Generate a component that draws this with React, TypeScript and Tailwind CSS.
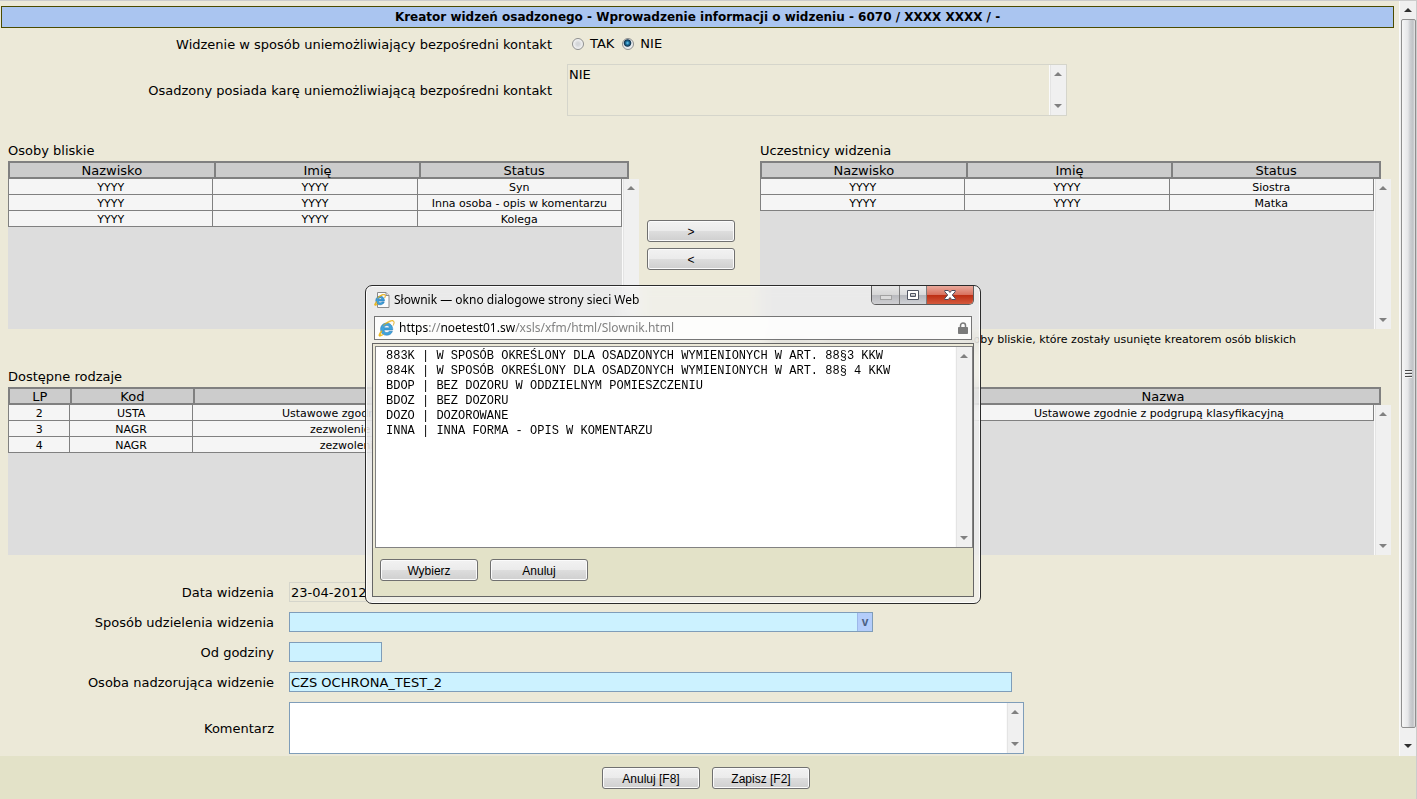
import React, { useId } from "react";

type Column = { title: string };

type GridTableProps = {
  label: string;
  columns: Column[];
  rows: string[][];
  tracks: string;
};

const verdana = "font-['DejaVu_Sans',sans-serif]";
const segoe = "font-['Noto_Sans',sans-serif]";

function ArrowUp({ dark = false }: { dark?: boolean }) {
  return (
    <svg width="8" height="4" viewBox="0 0 8 4" aria-hidden="true">
      <path d="M0 4 L4 0 L8 4 Z" fill={dark ? "#2e2e2e" : "#808080"} />
    </svg>
  );
}

function ArrowDown({ dark = false }: { dark?: boolean }) {
  return (
    <svg width="8" height="4" viewBox="0 0 8 4" aria-hidden="true">
      <path d="M0 0 L4 4 L8 0 Z" fill={dark ? "#2e2e2e" : "#808080"} />
    </svg>
  );
}

function IdleScrollbar() {
  return (
    <div className="flex w-[17px] shrink-0 flex-col items-center justify-between border-l border-[#fafafa] bg-[#f0f0f0] py-[7px] shadow-[inset_1px_0_0_#e4e4e4]">
      <ArrowUp />
      <ArrowDown />
    </div>
  );
}

function GridTable({ label, columns, rows, tracks }: GridTableProps) {
  const id = useId();
  return (
    <div className="min-w-0">
      <h2 id={id} className="h-[19px] text-[13px] leading-[17px]">
        {label}
      </h2>
      <div className="grid grid-cols-[1fr_17px] grid-rows-[18px_150px]">
        <table aria-labelledby={id} className="col-span-2 col-start-1 row-span-2 row-start-1 block">
          <thead className="mr-[10px] block border-2 border-[#808080] bg-[#ccc]">
            <tr className={`grid ${tracks}`}>
              {columns.map((c, i) => (
                <th
                  key={c.title}
                  className={`h-[14px] text-[13px] leading-4 font-normal ${i < columns.length - 1 ? "border-r-2 border-[#808080]" : ""}`}
                >
                  {c.title}
                </th>
              ))}
            </tr>
          </thead>
          <tbody className="mr-[17px] block h-[150px] bg-[#ddd]">
            {rows.map((r, i) => (
              <tr key={i} className={`grid border-l border-[#808080] bg-[#f5f5f5] ${tracks}`}>
                {r.map((cell, j) => (
                  <td
                    key={j}
                    className="h-4 overflow-hidden border-r border-b border-[#808080] text-center text-[11px] leading-[17px] whitespace-nowrap"
                  >
                    {cell}
                  </td>
                ))}
              </tr>
            ))}
          </tbody>
        </table>
        <div className="col-start-2 row-start-2 flex">
          <IdleScrollbar />
        </div>
      </div>
    </div>
  );
}

function PushButton({ children, className = "" }: { children: React.ReactNode; className?: string }) {
  return (
    <button
      type="button"
      className={`h-[22px] rounded-[3px] border border-[#707070] bg-[linear-gradient(#f2f2f2_0%,#ebebeb_48%,#dddddd_52%,#cfcfcf_100%)] pt-0.5 font-['Liberation_Sans',sans-serif] text-[12px] leading-[18px] shadow-[inset_0_0_0_1px_#fbfbfb] ${className}`}
    >
      {children}
    </button>
  );
}

function Radio({ label, checked }: { label: string; checked?: boolean }) {
  return (
    <label className="flex items-center gap-1.5">
      <input
        type="radio"
        name="kontakt"
        defaultChecked={checked}
        className="size-3 appearance-none rounded-full border border-[#8e8f8f] bg-[radial-gradient(circle,#d4d6d8_20%,#f4f4f4_70%)] checked:bg-[radial-gradient(circle_at_45%_40%,#6fd0f5_0%,#1b6d9c_22%,#12354f_40%,#e4e8ec_52%,#f6f6f6_100%)]"
      />
      <span className="leading-5">{label}</span>
    </label>
  );
}

function BrowserMark({ size, outline = 0.5 }: { size: number; outline?: number }) {
  return (
    <svg width={size} height={size} viewBox="0 0 18 18" aria-hidden="true">
      <path
        d="M15.6 10.6H6.4c.2 1.7 1.3 2.7 2.9 2.7 1.2 0 2-.5 2.5-1.3h3.500c-.9 2.600-3.100 4.200-6.100 4.200-3.900 0-6.500-2.600-6.500-6.300 0-3.900 2.700-6.600 6.500-6.600 4 0 6.600 2.900 6.400 7.300zM6.500 8.300h5.600c-.2-1.500-1.200-2.400-2.700-2.400-1.600 0-2.600.9-2.900 2.400z"
        fill="#3fa3dc"
        stroke="#1f6fae"
        strokeWidth={outline}
      />
      <path
        d="M3.800 11.200C.6 14.700.2 17.200 1.700 17.200c1 0 2.600-.8 4.300-2.200-3.200 1.800-4 .5-1.800-3zM10.200 3.200c3.500-2.300 6-2.500 6.600-1.300.4.900 0 2.300-.8 4 2.300-4.200.6-5.800-1.800-5.500-2.400.2-6 2.300-9 5.600 1.600-1.300 3.300-2.100 5-2.800z"
        fill="#f5c21b"
        stroke="#e0a713"
        strokeWidth={outline}
      />
    </svg>
  );
}

function PageIcon() {
  return (
    <svg width="16" height="16" viewBox="0 0 16 16" aria-hidden="true">
      <path d="M3.500.5h8.500l3 3v12h-11.500z" fill="#fcfcfc" stroke="#8a8a8a" />
      <path d="M12 .5v3h3" fill="#e2e2e2" stroke="#8a8a8a" />
      <svg x="0" y="2" width="12" height="12">
        <BrowserMark size={12} outline={0.9} />
      </svg>
    </svg>
  );
}

const entries = [
  "883K | W SPOSÓB OKREŚLONY DLA OSADZONYCH WYMIENIONYCH W ART. 88§3 KKW",
  "884K | W SPOSÓB OKREŚLONY DLA OSADZONYCH WYMIENIONYCH W ART. 88§ 4 KKW",
  "BDOP | BEZ DOZORU W ODDZIELNYM POMIESZCZENIU",
  "BDOZ | BEZ DOZORU",
  "DOZO | DOZOROWANE",
  "INNA | INNA FORMA - OPIS W KOMENTARZU",
];

function DictionaryDialog() {
  return (
    <div
      role="dialog"
      aria-labelledby="slownik-title"
      className="absolute top-[284px] left-[365px] flex h-[319px] w-[616px] flex-col rounded-[7px] border border-[#2b2b2b] bg-[#f4f4f4]/60 px-1.5 pb-1.5 shadow-[inset_0_0_0_1px_rgba(255,255,255,0.85)] backdrop-blur-[7px]"
    >
      <div className="flex h-[30px] justify-between">
        <div className="flex h-7 items-center gap-1 pl-0.5">
          <PageIcon />
          <h2 id="slownik-title" className={`${segoe} text-[12px] leading-4`}>
            Słownik — okno dialogowe strony sieci Web
          </h2>
        </div>
        <div className="flex h-[19px] overflow-hidden rounded-b-[5px] border border-t-0 border-[#5c5c5c]">
          <button
            type="button"
            disabled
            aria-label="Minimalizuj"
            className="flex w-7 justify-center border-r border-[#7c7c7c] bg-[linear-gradient(#e6e6e6_0%,#d6d6d6_48%,#b9babe_52%,#cfcfd2_100%)]"
          >
            <svg width="12" height="18" viewBox="0 0 12 18" aria-hidden="true">
              <rect x="0.500" y="9.500" width="11" height="4" fill="#dcdcdc" stroke="#a2a2a2" />
            </svg>
          </button>
          <button
            type="button"
            aria-label="Maksymalizuj"
            className="flex w-[27px] justify-center border-r border-[#7c7c7c] bg-[linear-gradient(#ececec_0%,#d9dadc_48%,#b4b6bc_52%,#d0d2d6_100%)]"
          >
            <svg width="12" height="18" viewBox="0 0 12 18" aria-hidden="true">
              <path d="M.5 4.500h11v9H.5z M3.500 7.500v3h5v-3z" fill="#fff" stroke="#4f5462" fillRule="evenodd" />
            </svg>
          </button>
          <button
            type="button"
            aria-label="Zamknij"
            className="flex w-[46px] justify-center bg-[linear-gradient(#e9a99c_0%,#d9725f_48%,#bd2f14_52%,#d4593c_100%)]"
          >
            <svg width="12" height="18" viewBox="0 0 12 18" aria-hidden="true">
              <path
                d="M.8 4.500h3.500l1.700 2 1.700-2h3.500v1.200L8.300 9l2.900 3.300v1.200H7.700l-1.700-2-1.700 2H.8v-1.200L3.700 9 .8 5.700z"
                fill="#fff"
                stroke="#4a4a5c"
              />
            </svg>
          </button>
        </div>
      </div>
      <div className="mx-0.5 flex h-6 shrink-0 items-center gap-1 border border-[#767676] bg-white/85 px-[3px]">
        <BrowserMark size={17} />
        <p className={`${segoe} flex-1 text-[12px] leading-4 text-[#828282]`}>
          <span className="text-black">https</span>://<span className="text-black">noetest01.sw</span>
          /xsls/xfm/html/Slownik.html
        </p>
        <svg width="10" height="12" viewBox="0 0 10 12" aria-hidden="true">
          <path d="M2.500 6V3.500a2.500 2.500 0 0 1 5 0V6" fill="none" stroke="#7b7b7b" strokeWidth="1.500" />
          <rect y="5" width="10" height="7" rx="0.800" fill="#7b7b7b" />
        </svg>
      </div>
      <div className="mt-[3px] flex min-h-0 flex-1 flex-col border border-[#666] bg-[#ece9d8] pt-0.5 pl-0.5">
        <div className="flex h-[202px] border border-[#828282] bg-white">
          <select
            size={13}
            aria-label="Słownik"
            className="min-w-0 flex-1 appearance-none overflow-hidden bg-white pt-0.5 font-['Liberation_Mono',monospace] text-[12px] outline-none"
          >
            {entries.map((e) => (
              <option key={e} className="h-[15px] min-h-[15px] px-[10px] py-0 leading-[15px]">
                {e}
              </option>
            ))}
          </select>
          <IdleScrollbar />
        </div>
        <div className="-ml-0.5 flex flex-1 items-start gap-3 bg-[#e3e2c8] pt-[11px] pl-[7px]">
          <PushButton className="w-[98px]">Wybierz</PushButton>
          <PushButton className="w-[98px]">Anuluj</PushButton>
        </div>
      </div>
    </div>
  );
}

const people: Column[] = [{ title: "Nazwisko" }, { title: "Imię" }, { title: "Status" }];
const kinds: Column[] = [{ title: "LP" }, { title: "Kod" }, { title: "Nazwa" }];

const field = "h-5 border border-[#7f9db9] bg-[#ccf2ff] px-px leading-[18px] outline-none";
const caption = "pt-0.5 text-right leading-[18px]";

export default function App() {
  return (
    <div className={`relative flex min-h-screen flex-col border-t border-r border-[#ccc] bg-[#ece9d8] text-[13px] text-black ${verdana}`}>
      <div className="flex flex-1">
        <main className="min-w-0 flex-1 pt-[5px] pb-0.5">
          <h1 className="mr-[5px] ml-px h-[22px] border border-[#4b4b00] bg-[#aac5f0] text-center text-[12px] leading-[21px] font-bold">
            Kreator widzeń osadzonego - Wprowadzenie informacji o widzeniu - 6070 / XXXX XXXX / -
          </h1>

          <div className="mt-1.5 grid grid-cols-[552px_1fr] items-center gap-x-[15px] gap-y-[10px]">
            <span className={caption}>Widzenie w sposób uniemożliwiający bezpośredni kontakt</span>
            <div className="flex h-5 items-center gap-2 pl-[5px]">
              <Radio label="TAK" />
              <Radio label="NIE" checked />
            </div>
            <label htmlFor="kara" className={caption}>
              Osadzony posiada karę uniemożliwiającą bezpośredni kontakt
            </label>
            <div className="flex h-[52px] w-[500px] border border-[#d5d5cb]">
              <textarea
                id="kara"
                readOnly
                defaultValue="NIE"
                className="min-w-0 flex-1 resize-none overflow-hidden bg-transparent px-px pt-0.5 leading-4 outline-none"
              />
              <IdleScrollbar />
            </div>
          </div>

          <div className="mt-[26px] grid grid-cols-[1fr_121px_1fr] px-2">
            <GridTable
              label="Osoby bliskie"
              columns={people}
              tracks="grid-cols-3"
              rows={[
                ["YYYY", "YYYY", "Syn"],
                ["YYYY", "YYYY", "Inna osoba - opis w komentarzu"],
                ["YYYY", "YYYY", "Kolega"],
              ]}
            />
            <div className="flex flex-col justify-center gap-1.5 pt-[19px] pr-[25px] pl-2">
              <PushButton>&gt;</PushButton>
              <PushButton>&lt;</PushButton>
            </div>
            <GridTable
              label="Uczestnicy widzenia"
              columns={people}
              tracks="grid-cols-3"
              rows={[
                ["YYYY", "YYYY", "Siostra"],
                ["YYYY", "YYYY", "Matka"],
              ]}
            />
          </div>
          <p className="h-5 pr-[103px] text-right text-[11px] leading-[22px]">
            Kolorem czerwonym oznaczono te osoby bliskie, które zostały usunięte kreatorem osób bliskich
          </p>

          <div className="mt-[19px] grid grid-cols-2 gap-x-[121px] px-2">
            <GridTable
              label="Dostępne rodzaje"
              columns={kinds}
              tracks="grid-cols-[10%_20%_70%]"
              rows={[
                ["2", "USTA", "Ustawowe zgodnie z podgrupą klasyfikacyjną"],
                ["3", "NAGR", "zezwolenie na widzenie bez dozoru"],
                ["4", "NAGR", "zezwolenie na dłuższe widzenie"],
              ]}
            />
            <GridTable
              label="Wybrane rodzaje"
              columns={kinds}
              tracks="grid-cols-[10%_20%_70%]"
              rows={[["1", "USTA", "Ustawowe zgodnie z podgrupą klasyfikacyjną"]]}
            />
          </div>

          <form className="mt-[27px] grid grid-cols-[274px_1fr] items-center gap-x-[15px] gap-y-[10px]">
            <label htmlFor="data" className={caption}>
              Data widzenia
            </label>
            <input
              id="data"
              readOnly
              defaultValue="23-04-2012"
              className="h-5 w-[93px] border border-[#d5d5cb] bg-transparent px-px leading-[18px] outline-none"
            />
            <label htmlFor="sposob" className={caption}>
              Sposób udzielenia widzenia
            </label>
            <div className="flex h-5 w-[584px] border border-[#7f9db9] bg-[#ccf2ff]">
              <input id="sposob" className="min-w-0 flex-1 px-px leading-[18px] outline-none" />
              <button
                type="button"
                aria-label="Otwórz słownik"
                className="w-[15px] border-l border-[#9db8e8] bg-[#b4cdfb] text-center font-['Liberation_Sans',sans-serif] text-[12px] leading-4 font-bold text-[#4d6185]"
              >
                v
              </button>
            </div>
            <label htmlFor="godzina" className={caption}>
              Od godziny
            </label>
            <input id="godzina" className={`w-[93px] ${field}`} />
            <label htmlFor="osoba" className={caption}>
              Osoba nadzorująca widzenie
            </label>
            <input id="osoba" defaultValue="CZS OCHRONA_TEST_2" className={`w-[723px] ${field}`} />
            <label htmlFor="komentarz" className={caption}>
              Komentarz
            </label>
            <div className="flex h-[52px] w-[735px] border border-[#7f9db9] bg-white">
              <textarea id="komentarz" className="min-w-0 flex-1 resize-none overflow-hidden px-px outline-none" />
              <IdleScrollbar />
            </div>
          </form>
        </main>

        <div className="flex w-[17px] shrink-0 flex-col items-center border-l border-[#fafafa] bg-[#f0f0f0]">
          <div className="flex h-[18px] items-center">
            <ArrowUp dark />
          </div>
          <div className="flex w-[15px] flex-1 items-center justify-center rounded-[2px] border border-[#8f8f8f] bg-[linear-gradient(90deg,#f6f6f6_0%,#e6e7e9_45%,#cfd1d4_60%,#c0c2c5_85%,#e8e8e8_100%)]">
            <svg width="7" height="9" viewBox="0 0 7 9" aria-hidden="true">
              <path d="M0 1.500h7M0 4.500h7M0 7.500h7" stroke="#4b4b4b" />
              <path d="M0 2.500h7M0 5.500h7M0 8.500h7" stroke="#f4f4f4" />
            </svg>
          </div>
          <div className="flex h-7 items-end pb-2">
            <ArrowDown dark />
          </div>
        </div>
      </div>

      <footer className="flex h-[43px] items-center justify-center gap-3 bg-[#e3e2c8] pr-1">
        <PushButton className="w-[98px]">Anuluj [F8]</PushButton>
        <PushButton className="w-[98px]">Zapisz [F2]</PushButton>
      </footer>

      <DictionaryDialog />
    </div>
  );
}
